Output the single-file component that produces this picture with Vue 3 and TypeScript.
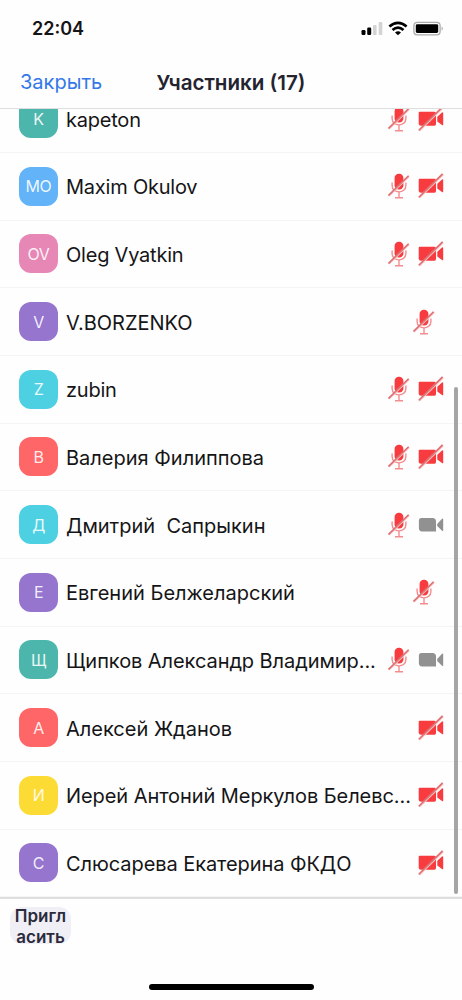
<script setup lang="ts">
type Camera = 'off' | 'on' | 'none'

interface Participant {
  name: string
  initials: string
  tone: string
  muted: boolean
  camera: Camera
  fit?: 'snug' | 'tight'
}

const participants: Participant[] = [
  { name: 'kapeton', initials: 'K', tone: 'teal', muted: true, camera: 'off', fit: 'tight' },
  { name: 'Maxim Okulov', initials: 'MO', tone: 'blue', muted: true, camera: 'off', fit: 'tight' },
  { name: 'Oleg Vyatkin', initials: 'OV', tone: 'pink', muted: true, camera: 'off', fit: 'tight' },
  { name: 'V.BORZENKO', initials: 'V', tone: 'purple', muted: true, camera: 'none' },
  { name: 'zubin', initials: 'Z', tone: 'cyan', muted: true, camera: 'off', fit: 'tight' },
  { name: 'Валерия Филиппова', initials: 'В', tone: 'red', muted: true, camera: 'off' },
  { name: 'Дмитрий  Сапрыкин', initials: 'Д', tone: 'cyan', muted: true, camera: 'on' },
  { name: 'Евгений Белжеларский', initials: 'Е', tone: 'purple', muted: true, camera: 'none' },
  { name: 'Щипков Александр Владимир...', initials: 'Щ', tone: 'teal', muted: true, camera: 'on', fit: 'snug' },
  { name: 'Алексей Жданов', initials: 'А', tone: 'red', muted: false, camera: 'off' },
  { name: 'Иерей Антоний Меркулов Белевс...', initials: 'И', tone: 'yellow', muted: false, camera: 'off', fit: 'snug' },
  { name: 'Слюсарева Екатерина ФКДО', initials: 'С', tone: 'purple', muted: false, camera: 'off', fit: 'snug' },
]
</script>

<template>
  <div class="screen">
    <div class="status">
      <span class="time">22:04</span>
      <svg class="signals" width="86" height="18" viewBox="0 0 86 18">
        <rect x="0.5" y="10" width="4" height="5" rx="1.2" fill="#000" />
        <rect x="6.2" y="7.5" width="4" height="7.5" rx="1.2" fill="#000" />
        <rect x="12" y="5" width="3.6" height="10" rx="1" fill="#d3d3d3" />
        <rect x="17.7" y="2" width="3.6" height="13" rx="1" fill="#d3d3d3" />
        <g fill="none" stroke="#000" stroke-width="2.7">
          <path d="M28.4 6.6Q37 -0.8 45.6 6.6" />
          <path d="M31.5 10.1Q37 5.2 42.5 10.1" />
        </g>
        <path d="M34 12.5Q37 9.8 40 12.5L37 15.3Z" fill="#000" />
        <rect x="52.9" y="2.3" width="26.2" height="12.6" rx="3.4" fill="none" stroke="#aaa" stroke-width="1.3" />
        <rect x="54.8" y="4.2" width="22.4" height="8.8" rx="1.4" fill="#000" />
        <path d="M80.6 6.4Q83.2 8.6 80.6 10.8Z" fill="#aaa" />
      </svg>
    </div>
    <header class="header">
      <span class="close">Закрыть</span>
      <h1 class="title">Участники (17)</h1>
    </header>
    <main class="list">
      <div class="rows">
        <div v-for="person in participants" :key="person.name" class="row">
          <div class="avatar" :class="person.tone">{{ person.initials }}</div>
          <span class="name" :class="person.fit">{{ person.name }}</span>
          <svg
            v-if="person.muted"
            class="mic"
            :class="{ alone: person.camera === 'none' }"
            width="22" height="26" viewBox="0 0 22 26"
          >
            <rect x="6.6" y="0.8" width="8.8" height="15.8" rx="4.2" fill="#f83b3e" />
            <g fill="none" stroke="#f38d8e" stroke-width="1.4">
              <path d="M4.1 9.5V12.4C4.1 21 17.9 21 17.9 12.4V9.5" />
              <path d="M11 19V24.2M7 24.7H15" />
            </g>
            <path d="M0.9 22.9L21 3.2" stroke="#fbc4c4" stroke-width="2" />
            <path d="M0.5 22.4L20.6 2.7" stroke="#dc7072" stroke-width="1.6" />
          </svg>
          <svg v-if="person.camera !== 'none'" class="camera" width="26" height="26" viewBox="0 0 26 26">
            <g v-if="person.camera === 'off'">
              <path d="M1.7 5.7H16.5Q18 5.7 18 7.2V18Q18 19.7 16.5 19.7H3Q0.7 19.7 0.7 17.4V6.7Q0.7 5.7 1.7 5.7Z" fill="#f83b3e" />
              <path d="M19.3 10.8L24 6.4Q25.2 5.8 25.2 7V18.4Q25.2 19.8 24 19L19.3 15.5Z" fill="#f83b3e" />
              <path d="M1.2 24.7L25 1.4" stroke="#fbc4c4" stroke-width="2.2" />
              <path d="M0.8 24.2L24.6 0.9" stroke="#dc7072" stroke-width="1.6" />
            </g>
            <g v-else fill="#919191">
              <path d="M3.4 5.9H14.5Q18 5.9 18 9.4V19.4H4Q0.9 19.4 0.9 16.3V8.4Q0.9 5.9 3.4 5.9Z" />
              <path d="M19.2 12L23.8 6.9Q25.2 5.8 25.2 7.5V18.2Q25.2 19.8 23.8 18.6L19.2 14.1Z" />
            </g>
          </svg>
        </div>
      </div>
      <div class="scrollbar"></div>
    </main>
    <footer class="footer">
      <button class="invite">Пригл<br />асить</button>
      <div class="home"></div>
    </footer>
  </div>
</template>

<style>
body {
  background: #fefefe;
}
</style>

<style scoped>
.screen {
  width: 462px;
  height: 1000px;
  overflow: hidden;
  display: flex;
  flex-direction: column;
  background: #fefefe;
  color: #151517;
  font-family: Inter, 'Liberation Sans', sans-serif;
}
.status {
  height: 56px;
  flex: none;
  display: flex;
  justify-content: space-between;
  align-items: flex-start;
  box-sizing: border-box;
  padding: 20px 15px 0 32px;
}
.time {
  font-size: 18px;
  line-height: 18px;
  font-weight: 600;
}
.header {
  height: 52px;
  flex: none;
  display: grid;
  grid-template-columns: 1fr auto 1fr;
  align-items: center;
  padding: 0 20px;
  border-bottom: 1px solid #dedede;
}
.close {
  color: #3478e8;
  font-size: 20px;
}
.title {
  margin: 0;
  font-size: 20.6px;
  font-weight: 600;
  color: #242430;
  white-space: nowrap;
}
.list {
  position: relative;
  height: 788px;
  flex: none;
  overflow: hidden;
}
.rows {
  margin-top: -23.7px;
}
.row {
  height: 67.67px;
  box-sizing: border-box;
  border-bottom: 1px solid #f4f4f4;
  display: flex;
  align-items: center;
  padding: 0 18px 0 19px;
}
.avatar {
  width: 39px;
  height: 39px;
  flex: none;
  border-radius: 12px;
  display: flex;
  align-items: center;
  justify-content: center;
  color: rgba(255, 255, 255, 0.9);
  font-size: 16px;
  font-weight: 400;
  letter-spacing: -0.4px;
}
.teal { background: #4db6ac; }
.blue { background: #62b3f8; }
.pink { background: #e787b6; }
.purple { background: #9575cd; }
.cyan { background: #4dd0e1; }
.red { background: #ff6667; }
.yellow { background: #fddb35; }
.name {
  flex: 1;
  min-width: 0;
  margin-left: 8px;
  padding-top: 2px;
  font-size: 20px;
  line-height: 28px;
  white-space: pre;
}
.name.snug {
  letter-spacing: -0.07px;
}
.name.tight {
  letter-spacing: -0.22px;
}
.mic {
  flex: none;
  margin-right: 8px;
}
.mic.alone {
  margin-right: 9.5px;
}
.camera {
  flex: none;
}
.scrollbar {
  position: absolute;
  top: 278px;
  right: 4px;
  width: 4px;
  height: 507px;
  border-radius: 2px;
  background: #a5a5a5;
}
.footer {
  flex: 1;
  display: flex;
  flex-direction: column;
  justify-content: space-between;
  border-top: 2px solid #dedede;
  padding: 8px 10px 10px;
}
.invite {
  width: 61px;
  height: 37px;
  padding: 2px 0 0;
  border: 0;
  border-radius: 12px;
  background: #f0eff6;
  color: #2b2b3c;
  font: 600 17px/21px Inter, 'Liberation Sans', sans-serif;
  display: flex;
  align-items: center;
  justify-content: center;
}
.home {
  align-self: center;
  width: 165px;
  height: 6px;
  border-radius: 3px;
  background: #000;
}
</style>
